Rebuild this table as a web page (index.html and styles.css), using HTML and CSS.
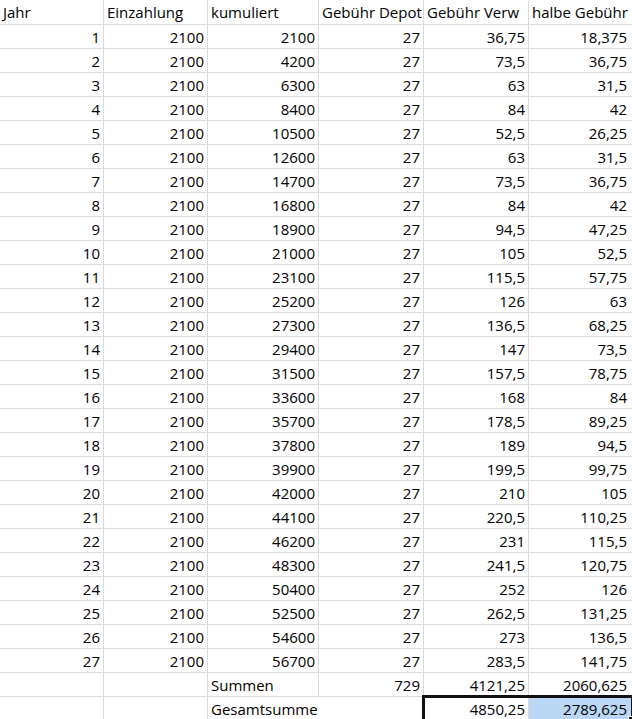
FILE: index.html
```html
<!DOCTYPE html>
<html lang="de">
<head>
<meta charset="utf-8">
<title>Tabelle</title>
<link rel="stylesheet" href="styles.css">
</head>
<body>
<div class="sheet">
  <div class="c">Jahr</div><div class="c">Einzahlung</div><div class="c">kumuliert</div><div class="c">Gebühr Depot</div><div class="c">Gebühr Verw</div><div class="c last">halbe Gebühr</div>
  <div class="c r">1</div><div class="c r">2100</div><div class="c r">2100</div><div class="c r">27</div><div class="c r">36,75</div><div class="c r last">18,375</div>
  <div class="c r">2</div><div class="c r">2100</div><div class="c r">4200</div><div class="c r">27</div><div class="c r">73,5</div><div class="c r last">36,75</div>
  <div class="c r">3</div><div class="c r">2100</div><div class="c r">6300</div><div class="c r">27</div><div class="c r">63</div><div class="c r last">31,5</div>
  <div class="c r">4</div><div class="c r">2100</div><div class="c r">8400</div><div class="c r">27</div><div class="c r">84</div><div class="c r last">42</div>
  <div class="c r">5</div><div class="c r">2100</div><div class="c r">10500</div><div class="c r">27</div><div class="c r">52,5</div><div class="c r last">26,25</div>
  <div class="c r">6</div><div class="c r">2100</div><div class="c r">12600</div><div class="c r">27</div><div class="c r">63</div><div class="c r last">31,5</div>
  <div class="c r">7</div><div class="c r">2100</div><div class="c r">14700</div><div class="c r">27</div><div class="c r">73,5</div><div class="c r last">36,75</div>
  <div class="c r">8</div><div class="c r">2100</div><div class="c r">16800</div><div class="c r">27</div><div class="c r">84</div><div class="c r last">42</div>
  <div class="c r">9</div><div class="c r">2100</div><div class="c r">18900</div><div class="c r">27</div><div class="c r">94,5</div><div class="c r last">47,25</div>
  <div class="c r">10</div><div class="c r">2100</div><div class="c r">21000</div><div class="c r">27</div><div class="c r">105</div><div class="c r last">52,5</div>
  <div class="c r">11</div><div class="c r">2100</div><div class="c r">23100</div><div class="c r">27</div><div class="c r">115,5</div><div class="c r last">57,75</div>
  <div class="c r">12</div><div class="c r">2100</div><div class="c r">25200</div><div class="c r">27</div><div class="c r">126</div><div class="c r last">63</div>
  <div class="c r">13</div><div class="c r">2100</div><div class="c r">27300</div><div class="c r">27</div><div class="c r">136,5</div><div class="c r last">68,25</div>
  <div class="c r">14</div><div class="c r">2100</div><div class="c r">29400</div><div class="c r">27</div><div class="c r">147</div><div class="c r last">73,5</div>
  <div class="c r">15</div><div class="c r">2100</div><div class="c r">31500</div><div class="c r">27</div><div class="c r">157,5</div><div class="c r last">78,75</div>
  <div class="c r">16</div><div class="c r">2100</div><div class="c r">33600</div><div class="c r">27</div><div class="c r">168</div><div class="c r last">84</div>
  <div class="c r">17</div><div class="c r">2100</div><div class="c r">35700</div><div class="c r">27</div><div class="c r">178,5</div><div class="c r last">89,25</div>
  <div class="c r">18</div><div class="c r">2100</div><div class="c r">37800</div><div class="c r">27</div><div class="c r">189</div><div class="c r last">94,5</div>
  <div class="c r">19</div><div class="c r">2100</div><div class="c r">39900</div><div class="c r">27</div><div class="c r">199,5</div><div class="c r last">99,75</div>
  <div class="c r">20</div><div class="c r">2100</div><div class="c r">42000</div><div class="c r">27</div><div class="c r">210</div><div class="c r last">105</div>
  <div class="c r">21</div><div class="c r">2100</div><div class="c r">44100</div><div class="c r">27</div><div class="c r">220,5</div><div class="c r last">110,25</div>
  <div class="c r">22</div><div class="c r">2100</div><div class="c r">46200</div><div class="c r">27</div><div class="c r">231</div><div class="c r last">115,5</div>
  <div class="c r">23</div><div class="c r">2100</div><div class="c r">48300</div><div class="c r">27</div><div class="c r">241,5</div><div class="c r last">120,75</div>
  <div class="c r">24</div><div class="c r">2100</div><div class="c r">50400</div><div class="c r">27</div><div class="c r">252</div><div class="c r last">126</div>
  <div class="c r">25</div><div class="c r">2100</div><div class="c r">52500</div><div class="c r">27</div><div class="c r">262,5</div><div class="c r last">131,25</div>
  <div class="c r">26</div><div class="c r">2100</div><div class="c r">54600</div><div class="c r">27</div><div class="c r">273</div><div class="c r last">136,5</div>
  <div class="c r">27</div><div class="c r">2100</div><div class="c r">56700</div><div class="c r">27</div><div class="c r">283,5</div><div class="c r last">141,75</div>
  <div class="c"></div><div class="c"></div><div class="c">Summen</div><div class="c r">729</div><div class="c r">4121,25</div><div class="c r last">2060,625</div>
  <div class="c"></div><div class="c"></div><div class="c span2">Gesamtsumme</div><div class="c r">4850,25</div><div class="c r last selfill">2789,625</div>
  <div class="sel"></div>
  <div class="handle"></div>
</div>
</body>
</html>
```

FILE: styles.css
```css
html, body {
  margin: 0;
  padding: 0;
  background: #ffffff;
}

.sheet {
  position: relative;
  width: 632px;
  height: 719px;
  overflow: hidden;
  display: grid;
  grid-template-columns: 103px 103px 110px 104px 104px 103px;
  grid-template-rows: 24px repeat(29, 23px);
  gap: 1px;
  background: #dadada;
  font-family: "Open Sans", "Liberation Sans", sans-serif;
  font-size: 15px;
  color: #000;
}

.c {
  background: #ffffff;
  padding: 3px 3px 0 3px;
  line-height: 18px;
  white-space: nowrap;
  overflow: visible;
}

.r {
  text-align: right;
}

.last {
  padding-right: 5px;
}

.span2 {
  grid-column: span 2;
}

.selfill {
  background: #bbd7f6;
}

.sel {
  position: absolute;
  left: 422px;
  top: 695px;
  width: 212px;
  height: 40px;
  box-sizing: border-box;
  border: 3px solid #111;
  pointer-events: none;
}

.handle {
  position: absolute;
  left: 628px;
  top: 716px;
  width: 6px;
  height: 6px;
  background: #111;
  border-left: 1px solid #fff;
  border-top: 1px solid #fff;
}
```
